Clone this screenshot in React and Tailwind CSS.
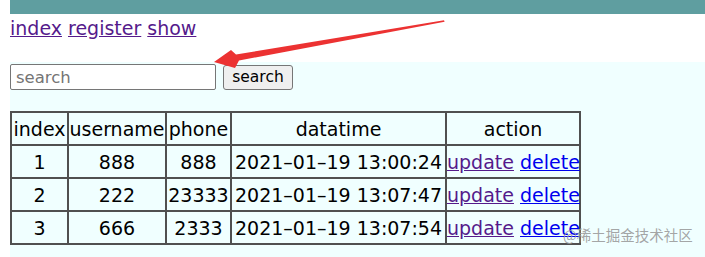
import React from "react";

const rows = [
  { id: 1, username: "888", phone: "888", time: "2021–01–19 13:00:24" },
  { id: 2, username: "222", phone: "23333", time: "2021–01–19 13:07:47" },
  { id: 3, username: "666", phone: "2333", time: "2021–01–19 13:07:54" },
];

const cell = "border-r-2 border-b-2 border-[#505050] px-0 text-center align-middle whitespace-nowrap";

export default function App() {
  return (
    <div className="relative flex min-h-[257px] flex-col overflow-hidden bg-white pl-[10px] font-['DejaVu_Sans',sans-serif] text-black">
      <div className="h-[14px] bg-[#5f9ea0]" />
      <nav className="flex h-[48px] gap-[6px] pt-[3px] text-[19px] leading-[22px]">
        <a href="#" className="text-[#551a8b] underline">index</a>
        <a href="#" className="text-[#551a8b] underline">register</a>
        <a href="#" className="text-[#551a8b] underline">show</a>
      </nav>
      <div className="flex-1 bg-[#f0ffff] pt-[2px] pb-[12px]">
        <form className="flex items-start gap-[7px]" onSubmit={(e) => e.preventDefault()}>
          <input
            placeholder="search"
            className="h-[26px] w-[206px] rounded-[2px] border border-[#767676] bg-white px-[5px] text-[16.5px] text-black outline-none placeholder:text-[#757575]"
          />
          <button className="mt-[1px] h-[25px] w-[70px] rounded-[3px] border border-[#767676] bg-[#efefef] text-[15.5px] leading-none text-black">
            search
          </button>
        </form>
        <table className="mt-[21px] w-[571px] table-fixed border-separate border-spacing-0 border-l-2 border-t-2 border-[#505050] text-[19px] leading-[22px]">
          <colgroup>
            <col className="w-[57px]" />
            <col className="w-[98px]" />
            <col className="w-[65px]" />
            <col className="w-[215px]" />
            <col className="w-[134px]" />
          </colgroup>
          <tbody>
            <tr className="h-[33px]">
              <td className={cell}>index</td>
              <td className={cell}>username</td>
              <td className={cell}>phone</td>
              <td className={cell}>datatime</td>
              <td className={cell}>action</td>
            </tr>
            {rows.map((r) => (
              <tr key={r.id} className="h-[33px]">
                <td className={cell}>{r.id}</td>
                <td className={cell}>{r.username}</td>
                <td className={cell}>{r.phone}</td>
                <td className={cell}>{r.time}</td>
                <td className={cell}>
                  <a href="#" className="text-[#551a8b] underline">update</a>{" "}
                  <a href="#" className="text-[#0000ee] underline">delete</a>
                </td>
              </tr>
            ))}
          </tbody>
        </table>
      </div>

      <svg className="pointer-events-none absolute left-0 top-0" width="705" height="257" viewBox="0 0 705 257">
        <polygon
          points="214,62 231,50 236,54.5 444,20.2 444.6,21.8 239,60.5 235,68"
          fill="#ec3232"
        />
      </svg>
      <span className="pointer-events-none absolute left-[563px] top-[228px] font-['Noto_Sans_CJK_SC',sans-serif] text-[14.5px] leading-none text-[#9a9a9a]/90">
        @稀土掘金技术社区
      </span>
    </div>
  );
}
